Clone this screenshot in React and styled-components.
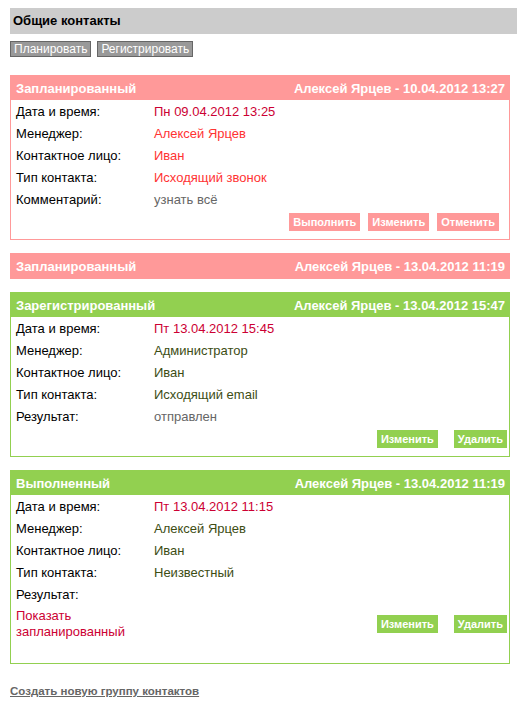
import React from 'react';
import styled, { createGlobalStyle } from 'styled-components';

const GlobalStyle = createGlobalStyle`
  body {
    margin: 0;
    background: #fff;
    font-family: "Liberation Sans", Arial, sans-serif;
    font-size: 13px;
    color: #000;
  }
`

const palette = {
  planned: { main: '#ff9999', value: '#ff3333' },
  done: { main: '#92d050', value: '#3d4d14' },
}

const Page = styled.div`
  padding: 8px 0 0 10px;
  overflow: hidden;
`

const TitleBar = styled.div`
  height: 26px;
  line-height: 26px;
  padding-left: 3px;
  background: #cccccc;
  font-weight: bold;
  font-size: 13px;
`

const Toolbar = styled.div`
  display: flex;
  gap: 6px;
  margin: 7px 0 18px;
`

const ToolButton = styled.button`
  height: 16px;
  padding: 0 3px;
  border: 1px solid #666;
  background: #999;
  color: #fff;
  font-family: inherit;
  font-size: 12px;
  line-height: 14px;
`

const List = styled.div`
  display: flex;
  flex-direction: column;
  gap: 13px;
  width: 500px;
`

const Card = styled.div`
  border: 1px solid ${p => p.$color};
  padding-bottom: ${p => (p.$collapsed ? 0 : p.$bottom)}px;
`

const CardHead = styled.div`
  display: flex;
  justify-content: space-between;
  align-items: center;
  height: 24px;
  padding: 0 4px 0 5px;
  background: ${p => p.$color};
  color: #fff;
  font-weight: bold;
  font-size: 13px;
`

const Rows = styled.div`
  display: grid;
  grid-template-columns: 138px 1fr;
  grid-auto-rows: 22px;
  align-items: center;
  padding-left: 5px;
`

const Label = styled.div`
  color: #000;
`

const Value = styled.div`
  color: ${p => p.$color};
`

const Footer = styled.div`
  display: flex;
  align-items: center;
  justify-content: space-between;
  margin-top: 3px;
  padding: 0 ${p => p.$right}px 0 5px;
`

const ShowLink = styled.div`
  width: 120px;
  line-height: 16px;
  color: #cc0033;
`

const Actions = styled.div`
  display: flex;
  gap: ${p => p.$gap}px;
  margin-left: auto;
`

const ActionButton = styled.button`
  height: 18px;
  padding: 0 4px;
  border: 0;
  background: ${p => p.$color};
  color: #fff;
  font-family: inherit;
  font-weight: bold;
  font-size: 11px;
  line-height: 18px;
`

const NewGroup = styled.a`
  display: inline-block;
  margin-top: 21px;
  color: #666;
  font-weight: bold;
  font-size: 11.5px;
  text-decoration: underline;
`

const cards = [
  {
    kind: 'planned',
    title: 'Запланированный',
    meta: 'Алексей Ярцев - 10.04.2012 13:27',
    rows: [
      ['Дата и время:', 'Пн 09.04.2012 13:25', '#cc0033'],
      ['Менеджер:', 'Алексей Ярцев'],
      ['Контактное лицо:', 'Иван'],
      ['Тип контакта:', 'Исходящий звонок'],
      ['Комментарий:', 'узнать всё', '#666'],
    ],
    actions: ['Выполнить', 'Изменить', 'Отменить'],
    gap: 8,
    right: 10,
    bottom: 8,
  },
  {
    kind: 'planned',
    title: 'Запланированный',
    meta: 'Алексей Ярцев - 13.04.2012 11:19',
    collapsed: true,
  },
  {
    kind: 'done',
    title: 'Зарегистрированный',
    meta: 'Алексей Ярцев - 13.04.2012 15:47',
    rows: [
      ['Дата и время:', 'Пт 13.04.2012 15:45', '#cc0033'],
      ['Менеджер:', 'Администратор'],
      ['Контактное лицо:', 'Иван'],
      ['Тип контакта:', 'Исходящий email'],
      ['Результат:', 'отправлен', '#666'],
    ],
    actions: ['Изменить', 'Удалить'],
    gap: 16,
    right: 2,
    bottom: 8,
  },
  {
    kind: 'done',
    title: 'Выполненный',
    meta: 'Алексей Ярцев - 13.04.2012 11:19',
    rows: [
      ['Дата и время:', 'Пт 13.04.2012 11:15', '#cc0033'],
      ['Менеджер:', 'Алексей Ярцев'],
      ['Контактное лицо:', 'Иван'],
      ['Тип контакта:', 'Неизвестный'],
      ['Результат:', ''],
    ],
    link: 'Показать запланированный',
    actions: ['Изменить', 'Удалить'],
    gap: 16,
    right: 2,
    bottom: 23,
  },
]

function ContactCard({ card }) {
  const colors = palette[card.kind]
  return (
    <Card $color={colors.main} $collapsed={card.collapsed} $bottom={card.bottom}>
      <CardHead $color={colors.main}>
        <span>{card.title}</span>
        <span>{card.meta}</span>
      </CardHead>
      {!card.collapsed && (
        <>
          <Rows>
            {card.rows.map(([label, value, color]) => (
              <React.Fragment key={label}>
                <Label>{label}</Label>
                <Value $color={color || colors.value}>{value}</Value>
              </React.Fragment>
            ))}
          </Rows>
          <Footer $right={card.right}>
            {card.link && <ShowLink>{card.link}</ShowLink>}
            <Actions $gap={card.gap}>
              {card.actions.map(a => (
                <ActionButton key={a} $color={colors.main}>{a}</ActionButton>
              ))}
            </Actions>
          </Footer>
        </>
      )}
    </Card>
  )
}

export default function App() {
  return (
    <>
      <GlobalStyle />
      <Page>
        <TitleBar>Общие контакты</TitleBar>
        <Toolbar>
          <ToolButton>Планировать</ToolButton>
          <ToolButton>Регистрировать</ToolButton>
        </Toolbar>
        <List>
          {cards.map((c, i) => <ContactCard key={i} card={c} />)}
        </List>
        <NewGroup href="#">Создать новую группу контактов</NewGroup>
      </Page>
    </>
  )
}
